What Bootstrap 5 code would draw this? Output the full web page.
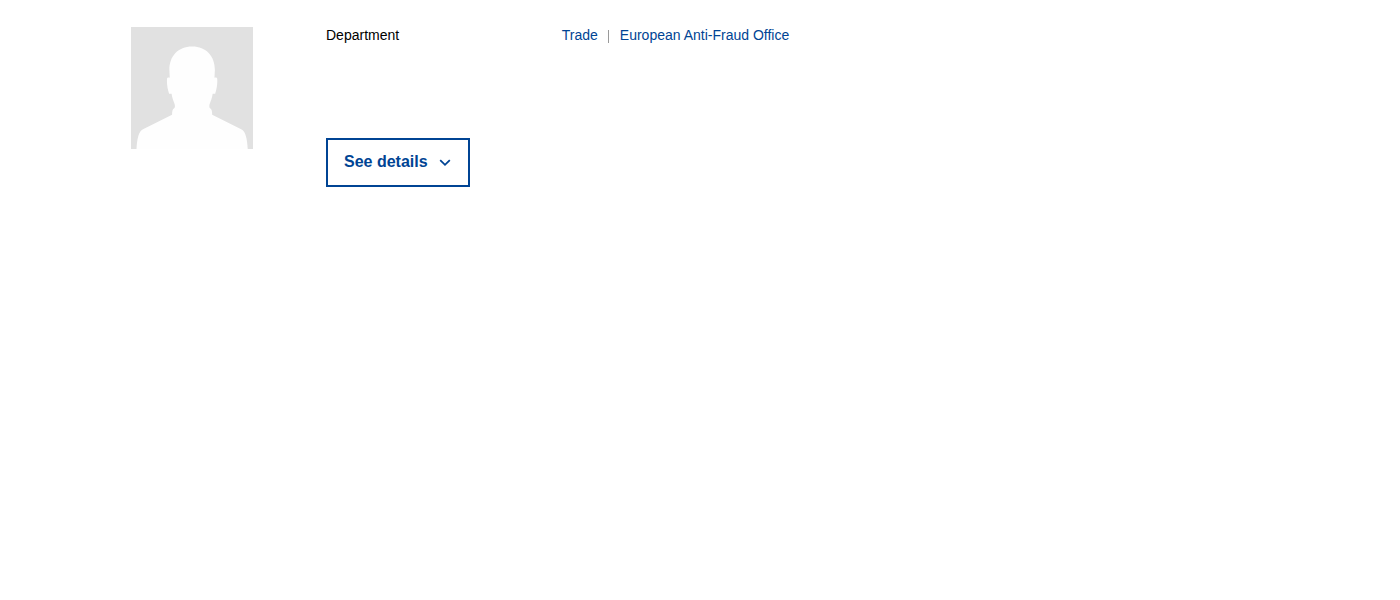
<!DOCTYPE html>
<html lang="en">
<head>
<meta charset="utf-8">
<meta name="viewport" content="width=device-width, initial-scale=1">
<title>Department</title>
<link href="https://cdn.jsdelivr.net/npm/bootstrap@5.3.0/dist/css/bootstrap.min.css" rel="stylesheet">
<style>
  :root { --brand: #004494; }
  body { font-family: "Liberation Sans", Arial, sans-serif; color: #000; }
  .page { max-width: 1138px; padding-top: 27px; }
  .profile-row { --bs-gutter-x: 32px; }
  .details { font-size: 14px; line-height: 16px; min-height: 111px; }
  .details a { color: var(--brand); }
  .details li + li { border-left: 1px solid #9a9a9a; margin-left: 10px; padding-left: 11px; }
  .details li { height: 13px; line-height: 10px; margin-top: 3px; }
  .btn-details {
    --bs-btn-color: var(--brand);
    --bs-btn-border-color: var(--brand);
    --bs-btn-hover-color: #fff;
    --bs-btn-hover-bg: var(--brand);
    --bs-btn-hover-border-color: var(--brand);
    --bs-btn-active-color: #fff;
    --bs-btn-active-bg: var(--brand);
    --bs-btn-border-width: 2px;
    --bs-btn-line-height: 21px;
    --bs-btn-font-weight: 700;
    padding: 11px 16px 13px;
    gap: 10px;
  }
</style>
</head>
<body>
<main class="page container px-3 px-xl-0">
  <div class="row profile-row">
    <div class="col-4 col-sm-3 col-lg-2">
      <svg class="w-75 d-block" viewBox="0 0 122 122" role="img" aria-label="Portrait placeholder">
        <path fill="#e1e1e1" d="M0 0h122v122H0z"/>
        <path fill="#fefefe" d="M5.500 122C6 112 7.500 104 12 102L41 87.500C41 84 41.500 82 42.500 81.500C43.800 81 44 80 43.700 77.500C42.500 73.500 41 71 40.500 66.500H38C36.500 62 35.500 56 36 51.500C36.300 50.500 37.500 50.300 38.700 50.700L38.300 43C38.300 29 47 19.500 61 19.500S83.700 29 83.700 43L83.300 50.700C84.500 50.300 85.700 50.500 86 51.500C86.500 56 85.500 62 84 66.500H81.500C81 71 79.500 73.500 78.300 77.500C78 80 78.200 81 79.500 81.500C80.500 82 81 84 81 87.500L110 102C114.500 104 116 112 116.500 122Z"/>
      </svg>
    </div>
    <div class="col">
      <dl class="row g-0 mb-0 details align-content-start">
        <dt class="col-sm-3 fw-normal">Department</dt>
        <dd class="col-sm-9 mb-0">
          <ul class="list-unstyled d-flex flex-wrap mb-0">
            <li><a class="text-decoration-none" href="#trade">Trade</a></li>
            <li><a class="text-decoration-none" href="#anti-fraud">European Anti-Fraud Office</a></li>
          </ul>
        </dd>
      </dl>
      <button type="button" class="btn btn-details rounded-0 d-inline-flex align-items-center">
        See details
        <svg width="14" height="14" viewBox="0 0 14 14" fill="none" stroke="currentColor" stroke-width="1.800" aria-hidden="true"><path d="M2.200 5.200l4.800 4.600 4.800-4.600"/></svg>
      </button>
    </div>
  </div>
</main>
<script src="https://cdn.jsdelivr.net/npm/bootstrap@5.3.0/dist/js/bootstrap.bundle.min.js"></script>
</body>
</html>
